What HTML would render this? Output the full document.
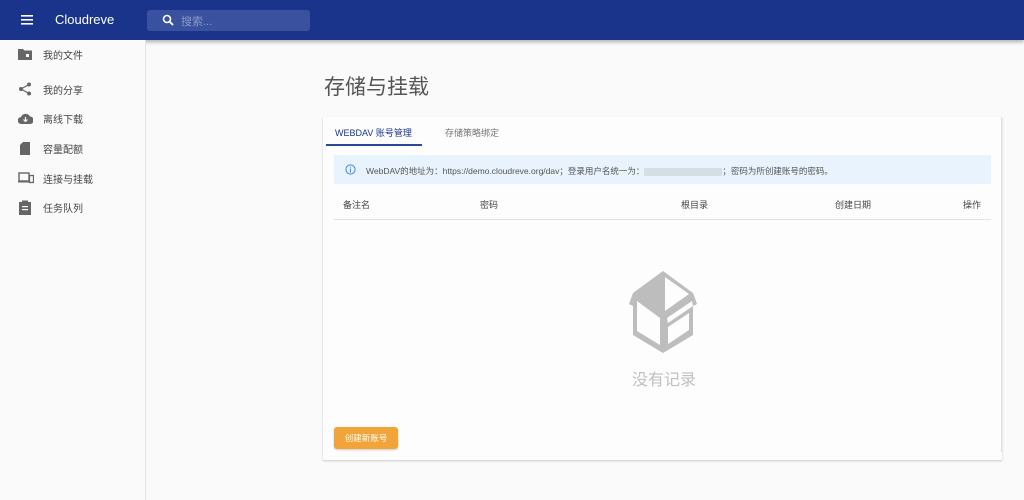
<!DOCTYPE html>
<html><head><meta charset="utf-8"><style>
*{margin:0;padding:0;box-sizing:border-box}
body{width:1024px;height:500px;background:#fafafa;font-family:"Liberation Sans","Noto Sans CJK SC",sans-serif;position:relative;overflow:hidden}
.hdr{position:absolute;left:0;top:0;width:1024px;height:40px;background:#1a348c;box-shadow:0 2px 4px rgba(0,0,0,.3)}
.hdr .logo{position:absolute;left:55px;top:12px;color:#fff;font-size:13px}
.search{position:absolute;left:147px;top:10px;width:163px;height:21px;background:#3a51a0;border-radius:3px}
.search span{position:absolute;left:34px;top:3px;color:#8c9ac8;font-size:11px}
.side{position:absolute;left:0;top:40px;width:146px;height:460px;border-right:1px solid #e4e4e4;background:#fafafa}
.it{position:absolute;left:43px;font-size:10px;color:#444}
.ic{position:absolute;left:18px}
h1{position:absolute;left:324px;top:71px;font-size:21px;font-weight:normal;color:#555}
.card{position:absolute;left:323px;top:117px;width:679px;height:343px;background:#fdfdfd;box-shadow:0 1px 2px rgba(0,0,0,.2)}
.tab1{position:absolute;left:12px;top:9px;font-size:9px;color:#1a348c}
.tab2{position:absolute;left:122px;top:9px;font-size:9px;color:#777}
.ul{position:absolute;left:3px;top:27px;width:96px;height:2px;background:#2a4799}
.info{position:absolute;left:11px;top:38px;width:657px;height:29px;background:#e8f3fd;font-size:8.5px;color:#555;padding:10px 0 0 32px}
.th{position:absolute;top:81px;font-size:9px;color:#444}
.line{position:absolute;left:11px;top:102px;width:657px;height:1px;background:#e4e4e4}
.btn{position:absolute;left:11px;top:310px;width:64px;height:22px;background:#f0a43a;border-radius:3px;color:#fff;font-size:8.5px;text-align:center;line-height:22px;box-shadow:0 1px 2px rgba(0,0,0,.2)}
</style></head><body>
<div class="hdr">
<svg style="position:absolute;left:21px;top:15px" width="12" height="10"><rect y="0" width="12" height="1.6" fill="#fff"/><rect y="4" width="12" height="1.6" fill="#fff"/><rect y="8" width="12" height="1.6" fill="#fff"/></svg>
<div class="logo">Cloudreve</div>
<div class="search"><svg style="position:absolute;left:15px;top:4px" width="12" height="12"><circle cx="5" cy="5" r="3.5" stroke="#fff" stroke-width="1.6" fill="none"/><line x1="7.5" y1="7.5" x2="11" y2="11" stroke="#fff" stroke-width="1.8"/></svg><span>搜索...</span></div>
</div>
<div class="side">
<svg class="ic" style="top:8px" width="14" height="12"><path d="M0 1h5l1.5 1.5H14V12H0z" fill="#666"/><rect x="8" y="6" width="3" height="3" fill="#fafafa"/></svg><div class="it" style="top:7px">我的文件</div>
<svg class="ic" style="top:42px" width="14" height="14"><circle cx="11" cy="2.5" r="2" fill="#666"/><circle cx="3" cy="7" r="2" fill="#666"/><circle cx="11" cy="11.5" r="2" fill="#666"/><path d="M11 2.5L3 7L11 11.5" stroke="#666" stroke-width="1.2" fill="none"/></svg><div class="it" style="top:42px">我的分享</div>
<svg class="ic" style="top:73px" width="15" height="11"><path d="M3.5 11a3.5 3.5 0 0 1-.5-7A5 5 0 0 1 12 3.5a3.7 3.7 0 0 1 0 7.5z" fill="#666"/><path d="M7.5 4v4M5.5 6.5l2 2 2-2" stroke="#fafafa" stroke-width="1.2" fill="none"/></svg><div class="it" style="top:71px">离线下载</div>
<svg class="ic" style="top:101px" width="14" height="14"><path d="M5 1h7v13H2V4z" fill="#666"/></svg><div class="it" style="top:101px">容量配额</div>
<svg class="ic" style="top:132px" width="16" height="12"><rect x="1" y="1" width="10" height="8" fill="none" stroke="#666" stroke-width="1.4"/><rect x="0" y="9" width="11" height="1.5" fill="#666"/><rect x="11.5" y="3.5" width="4" height="7" fill="none" stroke="#666" stroke-width="1.3"/></svg><div class="it" style="top:131px">连接与挂载</div>
<svg class="ic" style="top:160px" width="14" height="15"><path d="M1 2h12v13H1z" fill="#666"/><rect x="4" y="0.5" width="6" height="3" fill="#666"/><rect x="4" y="6" width="6" height="1.2" fill="#fafafa"/><rect x="4" y="9" width="6" height="1.2" fill="#fafafa"/></svg><div class="it" style="top:160px">任务队列</div>
</div>
<h1>存储与挂载</h1>
<div class="card">
<div class="tab1">WEBDAV 账号管理</div><div class="tab2">存储策略绑定</div><div class="ul"></div>
<div class="info"><svg style="position:absolute;left:11px;top:9px" width="11" height="11"><circle cx="5.5" cy="5.5" r="4.6" stroke="#3d8be0" fill="none" stroke-width="1"/><rect x="5" y="4.5" width="1" height="4" fill="#3d8be0"/><rect x="5" y="2.6" width="1" height="1" fill="#3d8be0"/></svg>WebDAV的地址为：https://demo.cloudreve.org/dav；登录用户名统一为：<span style="display:inline-block;width:78px;height:8px;background:#d5dde5;vertical-align:middle"></span>；密码为所创建账号的密码。</div>
<div class="th" style="left:20px">备注名</div><div class="th" style="left:157px">密码</div><div class="th" style="left:358px">根目录</div><div class="th" style="left:512px">创建日期</div><div class="th" style="left:640px">操作</div>
<div class="line"></div>
<svg style="position:absolute;left:298px;top:154px" width="84" height="82" viewBox="0 0 84 82"><path d="M42 0L72 22L76 33L72 35V64L42 82L12 64V35L8 33L12 22Z" fill="#bdbdbd"/><path d="M16 30L39 47V74L16 60Z" fill="#fdfdfd"/><path d="M44 6V40L68 23Z" fill="#fdfdfd"/><path d="M47 56L68 42V59L47 73Z" fill="#fdfdfd"/><path d="M46 47L71 30L72 35L47 52Z" fill="#fdfdfd"/></svg>
<div style="position:absolute;left:309px;top:249px;font-size:16px;color:#c0c0c0">没有记录</div>
<div class="btn">创建新账号</div>
</div>
<div style="position:absolute;left:1001px;top:117px;width:1px;height:335px;background:#e0e0e0"></div>
</body></html>
